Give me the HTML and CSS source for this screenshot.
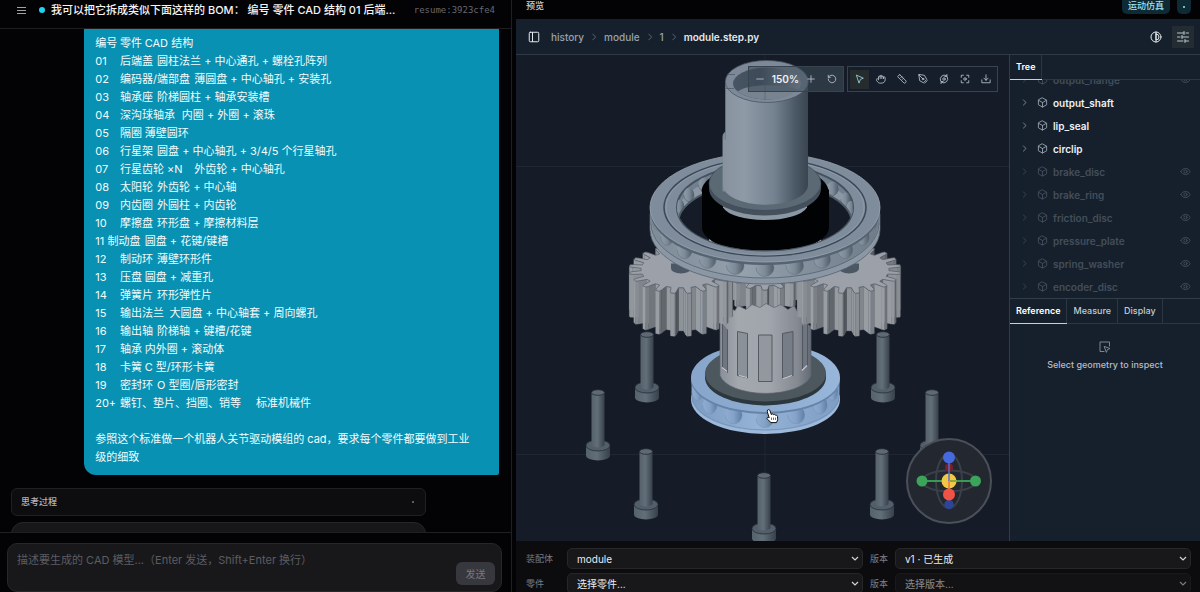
FILE: index.html
```html
<!DOCTYPE html>
<html lang="zh-CN">
<head>
<meta charset="utf-8">
<title>CAD 模型生成</title>
<link rel="stylesheet" href="styles.css">
</head>
<body>
<svg width="0" height="0" class="defs" aria-hidden="true">
  <symbol id="i-chev" viewBox="0 0 24 24"><path d="m9 5 7 7-7 7"/></symbol>
  <symbol id="i-cube" viewBox="0 0 24 24"><path d="M12 2 21 7v10l-9 5-9-5V7zM3.500 7.300 12 12l8.500-4.700M12 12v10"/></symbol>
  <symbol id="i-eye" viewBox="0 0 24 24"><path d="M2 12c4-9 16-9 20 0-4 9-16 9-20 0z"/><circle cx="12" cy="12" r="3.500"/></symbol>
</svg>
<div class="app">
  <section class="chat">
    <header class="chat-head">
      <button class="icon-btn" aria-label="菜单"><svg class="ic9" viewBox="0 0 9 9"><path d="M0 1.500h9M0 4.500h9M0 7.500h9"/></svg></button>
      <span class="dot"></span>
      <h1 class="chat-title">我可以把它拆成类似下面这样的 BOM： 编号 零件 CAD 结构 01 后端...</h1>
      <span class="resume">resume:3923cfe4</span>
    </header>
    <div class="messages">
      <div class="bubble">编号&#9;零件&#9;CAD 结构
01&#9;后端盖&#9;圆柱法兰 + 中心通孔 + 螺栓孔阵列
02&#9;编码器/端部盘&#9;薄圆盘 + 中心轴孔 + 安装孔
03&#9;轴承座&#9;阶梯圆柱 + 轴承安装槽
04&#9;深沟球轴承&#9;内圈 + 外圈 + 滚珠
05&#9;隔圈&#9;薄壁圆环
06&#9;行星架&#9;圆盘 + 中心轴孔 + 3/4/5 个行星轴孔
07&#9;行星齿轮 ×N&#9;外齿轮 + 中心轴孔
08&#9;太阳轮&#9;外齿轮 + 中心轴
09&#9;内齿圈&#9;外圆柱 + 内齿轮
10&#9;摩擦盘&#9;环形盘 + 摩擦材料层
11&#9;制动盘&#9;圆盘 + 花键/键槽
12&#9;制动环&#9;薄壁环形件
13&#9;压盘&#9;圆盘 + 减重孔
14&#9;弹簧片&#9;环形弹性片
15&#9;输出法兰&#9;大圆盘 + 中心轴套 + 周向螺孔
16&#9;输出轴&#9;阶梯轴 + 键槽/花键
17&#9;&#9;轴承&#9;内外圈 + 滚动体
18&#9;卡簧&#9;C 型/环形卡簧
19&#9;密封环&#9;O 型圈/唇形密封
20+&#9;螺钉、垫片、挡圈、销等&#9;&#9;标准机械件

参照这个标准做一个机器人关节驱动模组的 cad，要求每个零件都要做到工业级的细致</div>
      <button class="think"><span>思考过程</span><i class="tiny-dot"></i></button>
      <div class="reply"></div>
    </div>
    <form class="composer">
      <div class="box">
        <textarea aria-label="描述" placeholder="描述要生成的 CAD 模型...（Enter 发送，Shift+Enter 换行）"></textarea>
        <button type="button" class="send">发送</button>
      </div>
    </form>
  </section>

  <section class="preview">
    <header class="preview-head">
      <h2>预览</h2>
      <button class="pill">运动仿真</button>
      <button class="pill pill-dot" aria-label="更多"><i></i></button>
    </header>
    <div class="viewer">
      <nav class="crumbs">
        <button class="icon-btn" aria-label="侧栏"><svg class="ic12" viewBox="0 0 24 24"><rect x="2.500" y="2.500" width="19" height="19" rx="2"/><path d="M9 3v18"/></svg></button>
        <a href="#">history</a><svg class="sep"><use href="#i-chev"/></svg>
        <a href="#">module</a><svg class="sep"><use href="#i-chev"/></svg>
        <a href="#">1</a><svg class="sep"><use href="#i-chev"/></svg>
        <strong>module.step.py</strong>
        <span class="grow"></span>
        <button class="icon-btn theme" aria-label="主题"><svg class="ic12" viewBox="0 0 24 24"><circle cx="12" cy="12" r="10"/><path d="M12 6v12a6 6 0 0 0 0-12zM12 2v20"/></svg></button>
        <button class="icon-btn tune" aria-label="设置"><svg class="ic12" viewBox="0 0 24 24"><path d="M1 4h13M18 4h5M1 12h5M10 12h13M1 20h11M16 20h7M14 1v6M10 9v6M16 17v6"/></svg></button>
      </nav>
      <div class="work">
        <div class="canvas">
          <svg class="scene" viewBox="516 55 493 487" preserveAspectRatio="xMidYMid slice" role="img" aria-label="行星减速器模型">
            <defs>
              <linearGradient id="tube"><stop offset="0" stop-color="#87929e"/><stop offset=".25" stop-color="#8e9aa6"/><stop offset=".6" stop-color="#75828f"/><stop offset=".85" stop-color="#4b5865"/><stop offset="1" stop-color="#3a4551"/></linearGradient>
              <linearGradient id="bore"><stop offset="0" stop-color="#485663"/><stop offset=".4" stop-color="#3f4b58"/><stop offset="1" stop-color="#98a2ae"/></linearGradient>
              <linearGradient id="hub"><stop offset="0" stop-color="#8a9098"/><stop offset=".2" stop-color="#a3a7ae"/><stop offset=".55" stop-color="#a0a4ab"/><stop offset=".85" stop-color="#858a92"/><stop offset="1" stop-color="#636a74"/></linearGradient>
              <linearGradient id="steel"><stop offset="0" stop-color="#55616b"/><stop offset=".45" stop-color="#626e78"/><stop offset="1" stop-color="#36414c"/></linearGradient>
              <linearGradient id="ringSide"><stop offset="0" stop-color="#7d8a97"/><stop offset=".4" stop-color="#95a1ad"/><stop offset="1" stop-color="#6f7c89"/></linearGradient>
              <linearGradient id="ball"><stop offset="0" stop-color="#8e9ba8"/><stop offset=".5" stop-color="#7d8a97"/><stop offset="1" stop-color="#4f5c69"/></linearGradient>
              <linearGradient id="blueBall"><stop offset="0" stop-color="#8fadd2"/><stop offset=".5" stop-color="#84a2c8"/><stop offset="1" stop-color="#5f7ea3"/></linearGradient>
              <linearGradient id="blueSide"><stop offset="0" stop-color="#7d9bc0"/><stop offset=".45" stop-color="#95b3d6"/><stop offset="1" stop-color="#7e9dc2"/></linearGradient>
              <linearGradient id="blueTop"><stop offset="0" stop-color="#88a6cb"/><stop offset=".5" stop-color="#8dacd0"/><stop offset="1" stop-color="#97b6da"/></linearGradient>
              <clipPath id="boreClip"><ellipse cx="765" cy="208" rx="88" ry="43"/></clipPath>
              <clipPath id="blackClip"><path d="M677 150h176v58a88 43 0 0 1-176 0z"/></clipPath>
              <clipPath id="tubeClip"><ellipse cx="767" cy="84" rx="34" ry="16"/></clipPath>
              <g id="screw">
                <path d="M-12 56v10a12 5 0 0 0 24 0V56z" fill="url(#steel)"/>
                <ellipse cy="56" rx="12" ry="5.500" fill="#525e69" stroke="#252e38" stroke-width=".8"/>
                <path d="M-6.500 3v52a6.500 3 0 0 0 13 0V3z" fill="url(#steel)"/>
                <ellipse cy="3" rx="6.500" ry="2.800" fill="#5e6973" stroke="#222b35" stroke-width=".8"/>
              </g>
            </defs>
            <path d="M765 55v487M516 167h493M516 455h493" stroke="#222b38" stroke-width=".8"/>
            <use href="#screw" x="647" y="332"/><use href="#screw" x="883" y="332"/>
            <use href="#screw" x="598" y="390"/><use href="#screw" x="932" y="390"/>
            <use href="#screw" x="646" y="449"/><use href="#screw" x="882" y="449"/>
            <use href="#screw" x="764" y="473"/>

            <path d="M691 396v4a74.500 34.500 0 0 0 149 0v-4z" fill="#9dbadc"/>
            <path d="M691.500 380v17a74 34.500 0 0 0 148 0v-17z" fill="url(#blueSide)"/>
            <g id="blueBalls"></g>
            <path d="M691.500 396a74 34.500 0 0 0 148 0" fill="none" stroke="#7391b5" stroke-width=".8"/>
            <path d="M691 378v2a74.500 34.500 0 0 0 149 0v-2z" fill="#6583a8"/>
            <ellipse cx="765.500" cy="378" rx="74.500" ry="34.500" fill="url(#blueTop)"/>
            <path d="M705 374v4a60.500 28 0 0 0 121 0v-4z" fill="#2c363d"/>
            <ellipse cx="765.500" cy="374" rx="60.500" ry="28" fill="#4d575e"/>

            <g id="sun"></g>
            <path d="M720 376v-52l6-4 2-12 7 3 3-5 8 4 6-5 8 3 6-4 8 4 7-3 7 5 6-4 4 7 5-2 2 12 6 4v49a46 21 0 0 1-91 0z" fill="url(#hub)" stroke="#5c636d" stroke-width=".7"/>
            <g stroke="#4d545e" stroke-width=".9">
              <path d="M758.500 335.500h13.500v46.500h-13.500z" fill="#93989f"/>
              <path d="m737.500 332 10 2v44.500l-10-2.500z" fill="#8b9199"/>
              <path d="m782.500 334 10.500-2v44l-10.500 2.500z" fill="#777d86"/>
              <path d="M722.500 324v45l5 4v-43M802.500 326v45l5-5v-43" fill="#6f7680"/>
            </g>
            <path d="m739 376 8 2M722 368l5 4M783 379l9-3M802 371l5-5" stroke="#c8ccd2" stroke-width="1.200"/>
            <g id="planetL"></g>
            <g id="planetR"></g>
            <path d="M671 264v5a10 5 0 0 0 20 0v-5zM839 264v5a10 5 0 0 0 20 0v-5z" fill="#4b5763"/>

            <path d="M650 230a115 54.500 0 0 0 230 0v-16H650z" fill="#8b97a4" stroke="#55616d" stroke-width=".8"/>
            <path d="M651 214v12a114 53 0 0 0 228 0v-12z" fill="url(#ringSide)"/>
            <g id="ringBalls"></g>
            <path d="M651 225a114 54.500 0 0 0 228 0" fill="none" stroke="#8b98a5" stroke-width="2"/>
            <path d="M651 224a114 54.500 0 0 0 228 0" fill="none" stroke="#55626f" stroke-width=".8"/>
            <path d="M650 208v3a115 54.500 0 0 0 230 0v-3z" fill="#566370"/>
            <ellipse cx="765" cy="208" rx="115" ry="54.500" fill="#7f8c9b" stroke="#9aa6b3" stroke-width=".8"/>
            <ellipse cx="765" cy="208" rx="101" ry="48.500" fill="none" stroke="#3c4855" stroke-width="1.500"/>
            <ellipse cx="765" cy="208" rx="99" ry="47.500" fill="none" stroke="#929eac" stroke-width=".8"/>
            <ellipse cx="765" cy="208" rx="88" ry="43" fill="#71808e" stroke="#45515e"/>
            <g clip-path="url(#boreClip)">
              <ellipse cx="765" cy="215" rx="88" ry="43" fill="#8b97a4"/>
              <g id="backBalls"></g>
              <ellipse cx="765" cy="224" rx="87" ry="42" fill="#151c28" stroke="#4d5a67"/>
            </g>
            <g clip-path="url(#blackClip)">
              <path d="M709 238a57 20 0 0 0 112 0v10H709z" fill="#a9a4a2"/>
              <path d="M702 190v38a63.500 25 0 0 0 127 0v-38z" fill="#010203"/>
            </g>
            <path d="M701.500 192a63.500 27 0 0 1 127 0z" fill="#010203"/>
            <path d="M723 205v3a43 16 0 0 0 84 0v-3z" fill="#8a96a2"/>
            <path d="M709 184v5a56 27 0 0 0 112 0v-5z" fill="#44515d"/>
            <ellipse cx="765" cy="184" rx="56" ry="27" fill="#5b6975" stroke="#3c4854" stroke-width=".7"/>
            <path d="M722.500 138c0-4 2-5 3-6v60h-3z" fill="#7d8995"/>
            <path d="M725.300 82h82.700v104a42 19 0 0 1-85 0v-46h2.300z" fill="url(#tube)"/>
            <ellipse cx="766.800" cy="82" rx="41.500" ry="21" fill="#7d8998" stroke="#4a5663" stroke-width=".8"/>
            <ellipse cx="767" cy="84" rx="34" ry="16" fill="url(#bore)"/>
            <path d="M727 75h8M726 89h8" stroke="#4a5663" stroke-width=".7"/>
            <path d="M738 92c8-7 40-9 60-2v12h-60z" clip-path="url(#tubeClip)" fill="#77838f"/>
            <path d="M765 84v18" clip-path="url(#tubeClip)" stroke="#56636f" stroke-width=".7"/>

            <g fill="none">
              <circle cx="949" cy="481.500" r="42" fill="#232730" stroke="#4a4f58"/>
              <ellipse cx="949" cy="481.500" rx="27" ry="10.500" stroke="#3a3f48"/>
              <ellipse cx="949" cy="481.500" rx="13" ry="27" stroke="#3a3f48"/>
              <circle cx="949" cy="468" r="4" fill="#7b1f2c"/><circle cx="949" cy="505" r="4.700" fill="#2b4699"/>
              <path d="M922 481.500h54" stroke="#3a9a52" stroke-width="2"/>
              <circle cx="922" cy="481.500" r="5.500" fill="#3ba35a"/><circle cx="975.500" cy="481.500" r="5.500" fill="#3ba35a"/>
              <circle cx="949" cy="481.500" r="7.500" fill="#f2c744"/>
              <path d="M949 481.500v-20" stroke="#5470cd" stroke-width="1.500"/><path d="M949 481.500h7" stroke="#8ea33d"/>
              <path d="M949 481.500v12" stroke="#ef8a3c" stroke-width="2"/>
              <circle cx="949" cy="458" r="6" fill="#4669dd"/><circle cx="949" cy="495" r="6" fill="#f05245"/>
            </g>
            <path d="M767.500 410.500c1.200-1 2.200-.3 2.600 1l1.200 3.500c1-.9 2-.6 2.300.2.900-.6 1.800-.3 2 .6 1-.4 1.800 0 1.900 1.200l.2 3.300-1.200 2.800h-5.500l-3.800-3.600c-.8-1 .3-2.200 2-1.200l-1.900-6z" fill="#fff" stroke="#111" stroke-width="1"/>
            <path d="M771.500 418v2.500M773.500 418v2.500M775.500 418v2.500" stroke="#333" stroke-width=".7"/>
          </svg>
          <div class="tools">
            <div class="group zoom">
              <button aria-label="缩小"><svg viewBox="0 0 24 24"><path d="M4 12h16"/></svg></button>
              <output>150%</output>
              <button aria-label="放大"><svg viewBox="0 0 24 24"><path d="M4 12h16M12 4v16"/></svg></button>
              <button aria-label="重置"><svg viewBox="0 0 24 24"><path d="M3 12a9 9 0 1 0 3-6.700L3 8M3 3v5h5"/></svg></button>
            </div>
            <div class="group">
              <button class="on" aria-label="选择"><svg viewBox="0 0 24 24"><path d="m4 3 16 7-7 3-3 8z"/></svg></button>
              <button aria-label="平移"><svg viewBox="0 0 24 24"><path d="M18 11V7a2 2 0 0 0-4 0V5a2 2 0 0 0-4 0v2a2 2 0 0 0-4 0v7l-2-2a2 2 0 0 0-3 3l4 5c2 2 4 2 7 2 6 0 10-3 10-8v-5a2 2 0 0 0-4 0M14 7v4M10 7v4"/></svg></button>
              <button aria-label="测量"><svg viewBox="0 0 24 24"><path d="m7 2 15 15c1 2-3 6-5 5L2 7c-1-2 3-6 5-5zM9 9l3-3M13 13l3-3"/></svg></button>
              <button aria-label="标注"><svg viewBox="0 0 24 24"><path d="m2 2 2 14 9 5 8-8-5-9zM2 2l9 9M16 22l6-6"/><circle cx="12" cy="12" r="2"/></svg></button>
              <button aria-label="环绕"><svg viewBox="0 0 24 24"><circle cx="12" cy="12" r="3"/><path d="M4 17A10 10 0 0 1 18 4M20 7A10 10 0 0 1 6 20M19 1v5h-5M5 23v-5h5"/></svg></button>
              <button aria-label="聚焦"><svg viewBox="0 0 24 24"><circle cx="12" cy="12" r="3"/><path d="M3 8V3h5M16 3h5v5M21 16v5h-5M8 21H3v-5"/></svg></button>
              <button aria-label="下载"><svg viewBox="0 0 24 24"><path d="M12 2v13M7 10l5 5 5-5M2 14v7h20v-7"/></svg></button>
            </div>
          </div>
        </div>
        <aside class="side">
          <div class="tabs"><button class="active">Tree</button></div>
          <ul class="tree">
            <li class="off"><svg class="ch"><use href="#i-chev"/></svg><svg><use href="#i-cube"/></svg><span>output_flange</span><svg><use href="#i-eye"/></svg></li>
            <li><svg class="ch"><use href="#i-chev"/></svg><svg><use href="#i-cube"/></svg><span>output_shaft</span></li>
            <li><svg class="ch"><use href="#i-chev"/></svg><svg><use href="#i-cube"/></svg><span>lip_seal</span></li>
            <li><svg class="ch"><use href="#i-chev"/></svg><svg><use href="#i-cube"/></svg><span>circlip</span></li>
            <li class="off"><svg class="ch"><use href="#i-chev"/></svg><svg><use href="#i-cube"/></svg><span>brake_disc</span><svg><use href="#i-eye"/></svg></li>
            <li class="off"><svg class="ch"><use href="#i-chev"/></svg><svg><use href="#i-cube"/></svg><span>brake_ring</span><svg><use href="#i-eye"/></svg></li>
            <li class="off"><svg class="ch"><use href="#i-chev"/></svg><svg><use href="#i-cube"/></svg><span>friction_disc</span><svg><use href="#i-eye"/></svg></li>
            <li class="off"><svg class="ch"><use href="#i-chev"/></svg><svg><use href="#i-cube"/></svg><span>pressure_plate</span><svg><use href="#i-eye"/></svg></li>
            <li class="off"><svg class="ch"><use href="#i-chev"/></svg><svg><use href="#i-cube"/></svg><span>spring_washer</span><svg><use href="#i-eye"/></svg></li>
            <li class="off"><svg class="ch"><use href="#i-chev"/></svg><svg><use href="#i-cube"/></svg><span>encoder_disc</span><svg><use href="#i-eye"/></svg></li>
          </ul>
          <div class="inspect">
            <div class="tabs lower"><button class="active">Reference</button><button>Measure</button><button>Display</button></div>
            <div class="empty">
              <svg class="ic12" viewBox="0 0 24 24"><path d="M21 10V2H2v19h8M11 11l11 4-5 2-2 5z"/></svg>
              <p>Select geometry to inspect</p>
            </div>
          </div>
        </aside>
      </div>
    </div>
    <div class="pickers">
      <label for="asm">装配体</label><select id="asm"><option>module</option></select>
      <label for="asmv">版本</label><select id="asmv"><option>v1 · 已生成</option></select>
      <label for="part">零件</label><select id="part"><option>选择零件...</option></select>
      <label for="partv">版本</label><select id="partv" class="dim"><option>选择版本...</option></select>
    </div>
  </section>
</div>
<script src="scene.js"></script>
</body>
</html>
```

FILE: styles.css
```css
* { box-sizing: border-box; }
body {
  margin: 0;
  background: #030305;
  color: #e4e4e7;
  font: 11px/18px Inter, "Noto Sans CJK SC", sans-serif;
}
button, select, textarea { font: inherit; color: inherit; margin: 0; }
button { background: none; border: 0; padding: 0; }
h1, h2, p, ul { margin: 0; padding: 0; }
svg { fill: none; stroke: currentColor; stroke-width: 2; stroke-linecap: round; stroke-linejoin: round; }
.defs { position: absolute; }
.app { display: grid; grid-template-columns: minmax(0, 128fr) minmax(0, 171fr); gap: 4px; height: 100vh; overflow: hidden; }
.icon-btn { display: flex; align-items: center; justify-content: center; }
.ic9 { width: 9px; height: 9px; stroke-width: 1; }
.ic12 { width: 12px; height: 12px; }
.grow { flex: 1; }

.chat { display: flex; flex-direction: column; min-height: 0; border-right: 1px solid #202024; }
.chat-head { display: flex; align-items: center; height: 29px; padding: 0 16px 8px 17px; border-bottom: 1px solid #1e1e21; color: #a1a1aa; flex: none; }
.dot { width: 6px; height: 6px; margin: 0 6px 0 13px; border-radius: 50%; background: #22d3ee; flex: none; }
.chat-title { flex: 1; min-width: 0; font-size: 11px; font-weight: 500; line-height: 20px; color: #f4f4f5; white-space: nowrap; overflow: hidden; text-overflow: ellipsis; }
.resume { margin-left: 10px; font: 9px/12px "DejaVu Sans Mono", monospace; color: #68686f; }
.messages { flex: 1; min-height: 0; overflow: hidden; padding: 0 12px 0 11px; }
.bubble { width: 85%; margin-left: auto; padding: 5px 24px 9px 11px; background: #0891b2; color: #f4fbfd; border-radius: 0 0 2px 12px; white-space: pre-wrap; tab-size: 4; }
.think { display: flex; align-items: center; justify-content: space-between; width: 85%; height: 28px; margin-top: 13px; padding: 0 11px 0 9px; border: 1px solid #202023; border-radius: 6px; background: #0d0d10; color: #b4b4bb; font-size: 9px; font-weight: 500; }
.tiny-dot { width: 2px; height: 2px; border-radius: 50%; background: #77777e; }
.reply { width: 85%; height: 60px; margin-top: 6px; border: 1px solid #27272a; border-radius: 12px; background: #17171a; }
.composer { flex: none; height: 60px; padding: 10px 9px 0 7px; border-top: 1px solid #202023; }
.box { display: flex; align-items: flex-end; height: 49px; padding: 0 6px 6px 9px; border: 1px solid #27272b; border-radius: 10px; background: #18181b; }
.box textarea { flex: 1; height: 34px; padding: 0; border: 0; resize: none; background: none; outline: 0; }
.box textarea::placeholder { color: #5c5c63; }
.send { width: 39px; height: 23px; border-radius: 6px; background: #37373e; color: #77777f; font-size: 10px; }

.preview { display: flex; flex-direction: column; min-width: 0; min-height: 0; }
.preview-head { display: flex; gap: 7px; height: 19px; padding: 0 9px 0 10px; align-items: flex-start; flex: none; }
.preview-head h2 { flex: 1; font-size: 9px; line-height: 12px; font-weight: 500; color: #d4d4d8; }
.pill { height: 14px; padding: 0 6px 2px; border-radius: 0 0 5px 5px; background: #0e2a35; color: #a5e3ee; font-size: 9px; line-height: 12px; font-weight: 500; }
.pill-dot { width: 14px; padding: 0; display: grid; place-items: center; }
.pill-dot i { width: 2px; height: 2px; background: #a5e3ee; border-radius: 50%; }
.viewer { flex: 1; min-height: 0; display: flex; flex-direction: column; background: #16202c; }
.crumbs { display: flex; align-items: center; height: 36px; flex: none; padding: 0 6px 0 12px; border-bottom: 1px solid #2f3a46; font-size: 10px; font-weight: 500; color: #e5e9ee; }
.crumbs .icon-btn:first-child { margin-right: 11px; }
.crumbs a { color: #98a2ae; text-decoration: none; }
.crumbs strong { font-weight: 600; }
.sep { width: 10px; height: 10px; margin: 0 5px; color: #66717e; flex: none; }
.theme { width: 22px; margin-right: 5px; }
.tune { width: 22px; height: 22px; background: #232b33; color: #b6c9c9; }
.work { flex: 1; min-height: 0; display: grid; grid-template-columns: minmax(0, 1fr) 191px; }
.canvas { position: relative; min-height: 0; overflow: hidden; background: #151c28; }
.scene { position: absolute; inset: 0; width: 100%; height: 100%; stroke: none; stroke-linecap: butt; }
.tools { position: absolute; top: 11px; right: 11px; display: flex; gap: 3px; }
.group { display: flex; align-items: center; height: 26px; padding: 0 2px; gap: 2px; border: 1px solid #37434f; background: #151f2bee; color: #bcc6d0; }
.group button { display: grid; place-items: center; width: 19px; height: 19px; }
.group button svg { width: 10px; height: 10px; }
.group .on { background: #262c2e; color: #9ad8e4; }
.zoom { background: #3e4b5899; }
.zoom output { font-size: 10px; font-weight: 600; color: #eef1f4; }

.side { display: flex; flex-direction: column; min-height: 0; border-left: 1px solid #313d49; }
.tabs { display: flex; height: 25px; border-bottom: 1px solid #2b3642; flex: none; }
.tabs button { padding: 0 6px; border-right: 1px solid #2b3642; font-size: 9px; font-weight: 500; color: #c2cad3; }
.tabs .active { color: #fff; font-weight: 600; box-shadow: 0 1px #c7d0d9; }
.tree { display: flex; flex-direction: column; justify-content: flex-end; height: 218px; overflow: hidden; list-style: none; font-size: 10px; font-weight: 600; color: #eef1f4; }
.tree li { display: flex; align-items: center; height: 23px; flex: none; padding: 0 9px 0 10px; }
.tree svg { width: 11px; height: 11px; color: #96a1ad; }
.tree .ch { width: 9px; height: 9px; margin-right: 8px; }
.tree span { flex: 1; margin-left: 5px; }
.tree .off, .tree .off svg { color: #434e5a; }
.inspect { flex: 1; border-top: 1px solid #313d49; }
.empty { display: flex; flex-direction: column; align-items: center; gap: 3px; padding-top: 17px; font-size: 9px; font-weight: 500; color: #b4bdc7; }
.empty svg { color: #7b8692; }

.pickers { flex: none; display: grid; grid-template-columns: 34px 1fr 18px 1fr; grid-auto-rows: 21px; align-content: start; align-items: center; gap: 4px 7px; height: 51px; padding: 7px 9px 0 10px; background: #0c0c0f; overflow: hidden; }
.pickers label { font-size: 9px; color: #7c7c84; white-space: nowrap; }
.pickers select { height: 21px; min-width: 0; padding: 0 20px 0 9px; border: 1px solid #27272a; border-radius: 5px; appearance: none; font-size: 10px; color: #ececef;
  background: #18181b url("data:image/svg+xml,%3Csvg xmlns='http://www.w3.org/2000/svg' width='8' height='6'%3E%3Cpath d='m1 1 3 3 3-3' fill='none' stroke='%23d4d4d8' stroke-width='1.200'/%3E%3C/svg%3E") no-repeat right 3px center; }
.pickers .dim { opacity: .55; }
```

FILE: scene.js
```js
const NS = 'http://www.w3.org/2000/svg';

function add(parent, name, attrs) {
  const node = document.createElementNS(NS, name);
  for (const key in attrs) node.setAttribute(key, attrs[key]);
  parent.appendChild(node);
}

function shade(light) {
  const v = Math.round(82 + 80 * Math.max(0, Math.min(1, light)));
  return `rgb(${v},${v + 5},${v + 11})`;
}

// Spur gear seen from above: visible tooth walls back to front, then the top face.
function gear(id, g) {
  const parent = document.getElementById(id);
  const points = [];
  const profile = [[-0.3, g.root], [-0.19, g.r - 3], [-0.12, g.r], [0.12, g.r], [0.19, g.r - 3], [0.3, g.root]];
  for (let i = 0; i < g.teeth; i++) {
    for (const [offset, radius] of profile) {
      const a = (i + offset + g.phase) * 2 * Math.PI / g.teeth;
      points.push([g.x + radius * Math.cos(a), g.y + radius * g.ratio * Math.sin(a)]);
    }
  }
  const walls = [];
  points.forEach((p, i) => {
    const q = points[(i + 1) % points.length];
    if (q[0] >= p[0]) return;
    const dx = p[0] - q[0];
    const dy = (q[1] - p[1]) / g.ratio;
    const len = Math.hypot(dx, dy) || 1;
    walls.push({ p, q, light: 0.45 * dx / len - 0.4 * dy / len + 0.3 });
  });
  walls.sort((a, b) => a.p[1] + a.q[1] - b.p[1] - b.q[1]);
  for (const { p, q, light } of walls) {
    const fill = shade(light);
    add(parent, 'path', {
      d: `M${p}L${q}V${q[1] + g.depth}L${p[0]} ${p[1] + g.depth}Z`,
      fill, stroke: fill, 'stroke-width': 0.3
    });
  }
  add(parent, 'path', { d: `M${points.join('L')}Z`, fill: '#9ca1a9', stroke: '#555c66', 'stroke-width': 0.7 });
}

// Bearing balls seated between the two races.
function balls(id, b) {
  const parent = document.getElementById(id);
  for (const deg of b.angles) {
    const a = deg * Math.PI / 180;
    const x = b.x + b.rx * Math.cos(a);
    const y = b.y + b.ry * Math.sin(a);
    const w = b.size * (0.5 + 0.5 * Math.abs(Math.sin(a)));
    add(parent, 'ellipse', { cx: x, cy: y, rx: w, ry: b.size, fill: `url(#${b.fill})` });
    add(parent, 'path', { d: `M${x - w} ${y}A${w} ${b.size} 0 0 0 ${x + w} ${y}`, fill: 'none', stroke: b.line, 'stroke-width': 0.6 });
  }
}

gear('sun', { x: 765, y: 275, r: 34, root: 25, ratio: 0.46, depth: 24, teeth: 12, phase: 0 });
gear('planetL', { x: 681, y: 270, r: 52, root: 40, ratio: 0.46, depth: 43, teeth: 20, phase: 0.5 });
gear('planetR', { x: 849, y: 270, r: 52, root: 40, ratio: 0.46, depth: 43, teeth: 20, phase: 0.5 });
balls('ringBalls', { x: 765, y: 214, rx: 108, ry: 54, size: 9, angles: [8, 25, 42, 58, 74, 90, 106, 122, 138, 155, 172], fill: 'ball', line: '#66737f' });
balls('blueBalls', { x: 765, y: 385, rx: 69, ry: 34, size: 9, angles: [12, 37, 63, 90, 117, 143, 168], fill: 'blueBall', line: '#7593b8' });
balls('backBalls', { x: 765, y: 216, rx: 87, ry: 43, size: 7, angles: [192, 209, 226, 304, 321, 338, 350], fill: 'ball', line: '#53606d' });
```
